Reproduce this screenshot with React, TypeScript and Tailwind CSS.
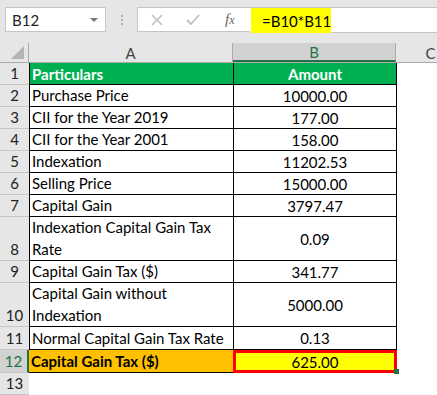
import React from "react";

const font = { fontFamily: "Lato, 'Liberation Sans', sans-serif" };

interface Row {
  n: number;
  label: string;
  value: string;
  tall?: boolean;
  h?: string;
}

const rows: Row[] = [
  { n: 2, label: "Purchase Price", value: "10000.00" },
  { n: 3, label: "CII for the Year 2019", value: "177.00" },
  { n: 4, label: "CII for the Year 2001", value: "158.00" },
  { n: 5, label: "Indexation", value: "11202.53" },
  { n: 6, label: "Selling Price", value: "15000.00" },
  { n: 7, label: "Capital Gain", value: "3797.47" },
  { n: 8, label: "Indexation Capital Gain Tax Rate", value: "0.09", tall: true },
  { n: 9, label: "Capital Gain Tax ($)", value: "341.77" },
  { n: 10, label: "Capital Gain without Indexation", value: "5000.00", tall: true },
  { n: 11, label: "Normal Capital Gain Tax Rate", value: "0.13", h: "h-[23px]" },
];

function RowNum({ n, selected }: { n: number; selected?: boolean }) {
  return (
    <div
      className={
        "w-[29px] shrink-0 flex items-end justify-center pb-[1px] border-b border-[#c6c6c6] " +
        (selected
          ? "bg-[#d2d2d2] text-[#217346] border-r-2 border-r-[#217346]"
          : "bg-[#e6e6e6] text-[#222]")
      }
    >
      {n}
    </div>
  );
}

export default function App() {
  return (
    <div
      className="w-[437px] h-[395px] overflow-hidden bg-white text-[15px] leading-[20px] text-black"
      style={font}
    >
      {/* formula bar */}
      <div className="h-[43px] bg-[#e6e6e6] flex items-start pt-[7px]">
        <div className="ml-[5px] w-[101px] h-[25px] bg-white border border-[#c6c6c6] flex items-center justify-between pl-[6px] pr-[7px]">
          <span className="text-[15px] text-[#222]">B12</span>
          <span className="w-0 h-0 border-l-[4px] border-r-[4px] border-t-[4px] border-l-transparent border-r-transparent border-t-[#777]" />
        </div>
        <div className="w-[31px] h-[25px] flex flex-col items-center justify-center gap-[2px]">
          <span className="w-[2px] h-[2px] bg-[#b0b0b0]" />
          <span className="w-[2px] h-[2px] bg-[#b0b0b0]" />
          <span className="w-[2px] h-[2px] bg-[#b0b0b0]" />
        </div>
        <div className="w-[113px] h-[25px] bg-white border border-[#c6c6c6] border-r-0 flex items-center">
          <svg className="ml-[13px]" width="12" height="12" viewBox="0 0 12 12">
            <path d="M1 1L11 11M11 1L1 11" stroke="#c0c0c0" strokeWidth="1.6" />
          </svg>
          <svg className="ml-[23px]" width="14" height="11" viewBox="0 0 14 11">
            <path d="M1 6L5 10L13 1" stroke="#c0c0c0" strokeWidth="1.8" fill="none" />
          </svg>
          <span
            className="ml-[25px] text-[15px] italic text-[#666]"
            style={{ fontFamily: "'Liberation Serif', serif" }}
          >
            f<span className="text-[12px]">x</span>
          </span>
        </div>
        <div className="flex-1 h-[26px] bg-white border-y border-[#c6c6c6] flex items-start">
          <div className="ml-[1px] w-[80px] h-[25px] bg-[#ffff00] pl-[11px] flex items-center text-[15px]">
            =B10*B11
          </div>
        </div>
      </div>

      {/* column headers */}
      <div className="flex h-[20px] bg-[#e6e6e6] text-[#444] border-b border-[#ababab]">
        <div className="w-[29px] shrink-0 border-r border-[#ababab] relative">
          <span
            className="absolute right-[4px] bottom-[3px] w-0 h-0"
            style={{ borderBottom: "13px solid #b4b4b4", borderLeft: "13px solid transparent" }}
          />
        </div>
        <div className="w-[204px] shrink-0 border-r border-[#ababab] flex items-center justify-center">A</div>
        <div className="w-[163px] shrink-0 bg-[#d2d2d2] border-r border-[#ababab] border-b-2 border-b-[#217346] flex items-center justify-center text-[#217346]">
          B
        </div>
        <div className="flex-1 flex items-center justify-center pl-[28px]">C</div>
      </div>

      {/* row 1 */}
      <div className="flex h-[22px]">
        <RowNum n={1} />
        <div className="w-[204px] shrink-0 bg-[#00b050] border-l border-b border-black pl-[2px] font-bold text-white flex items-center">
          Particulars
        </div>
        <div className="w-[164px] shrink-0 bg-[#00b050] border-x border-b border-black font-bold text-white flex items-center justify-center">
          Amount
        </div>
      </div>

      {rows.map((r) => (
        <div key={r.n} className={"flex " + (r.tall ? "h-[44px]" : r.h ?? "h-[22px]")}>
          <RowNum n={r.n} />
          <div className="w-[204px] shrink-0 border-l border-b border-black pl-[2px] flex items-end leading-[22px]">
            <span className={r.tall ? "w-[190px]" : ""}>{r.label}</span>
          </div>
          <div className="w-[164px] shrink-0 border-x border-b border-black flex items-center justify-center">
            {r.value}
          </div>
        </div>
      ))}

      {/* row 12 */}
      <div className="flex h-[23px]">
        <RowNum n={12} selected />
        <div className="w-[204px] shrink-0 bg-[#ffc000] border-b border-black pl-[2px] font-bold flex items-center">
          Capital Gain Tax ($)
        </div>
        <div className="w-[164px] shrink-0 bg-[#ffff00] border-[3px] border-[#ff0000] flex items-center justify-center relative">
          625.00
          <span className="absolute right-[-5px] bottom-[-4px] w-[5px] h-[5px] bg-[#217346]" />
        </div>
      </div>

      {/* row 13 */}
      <div className="flex h-[22px]">
        <RowNum n={13} />
      </div>
    </div>
  );
}
